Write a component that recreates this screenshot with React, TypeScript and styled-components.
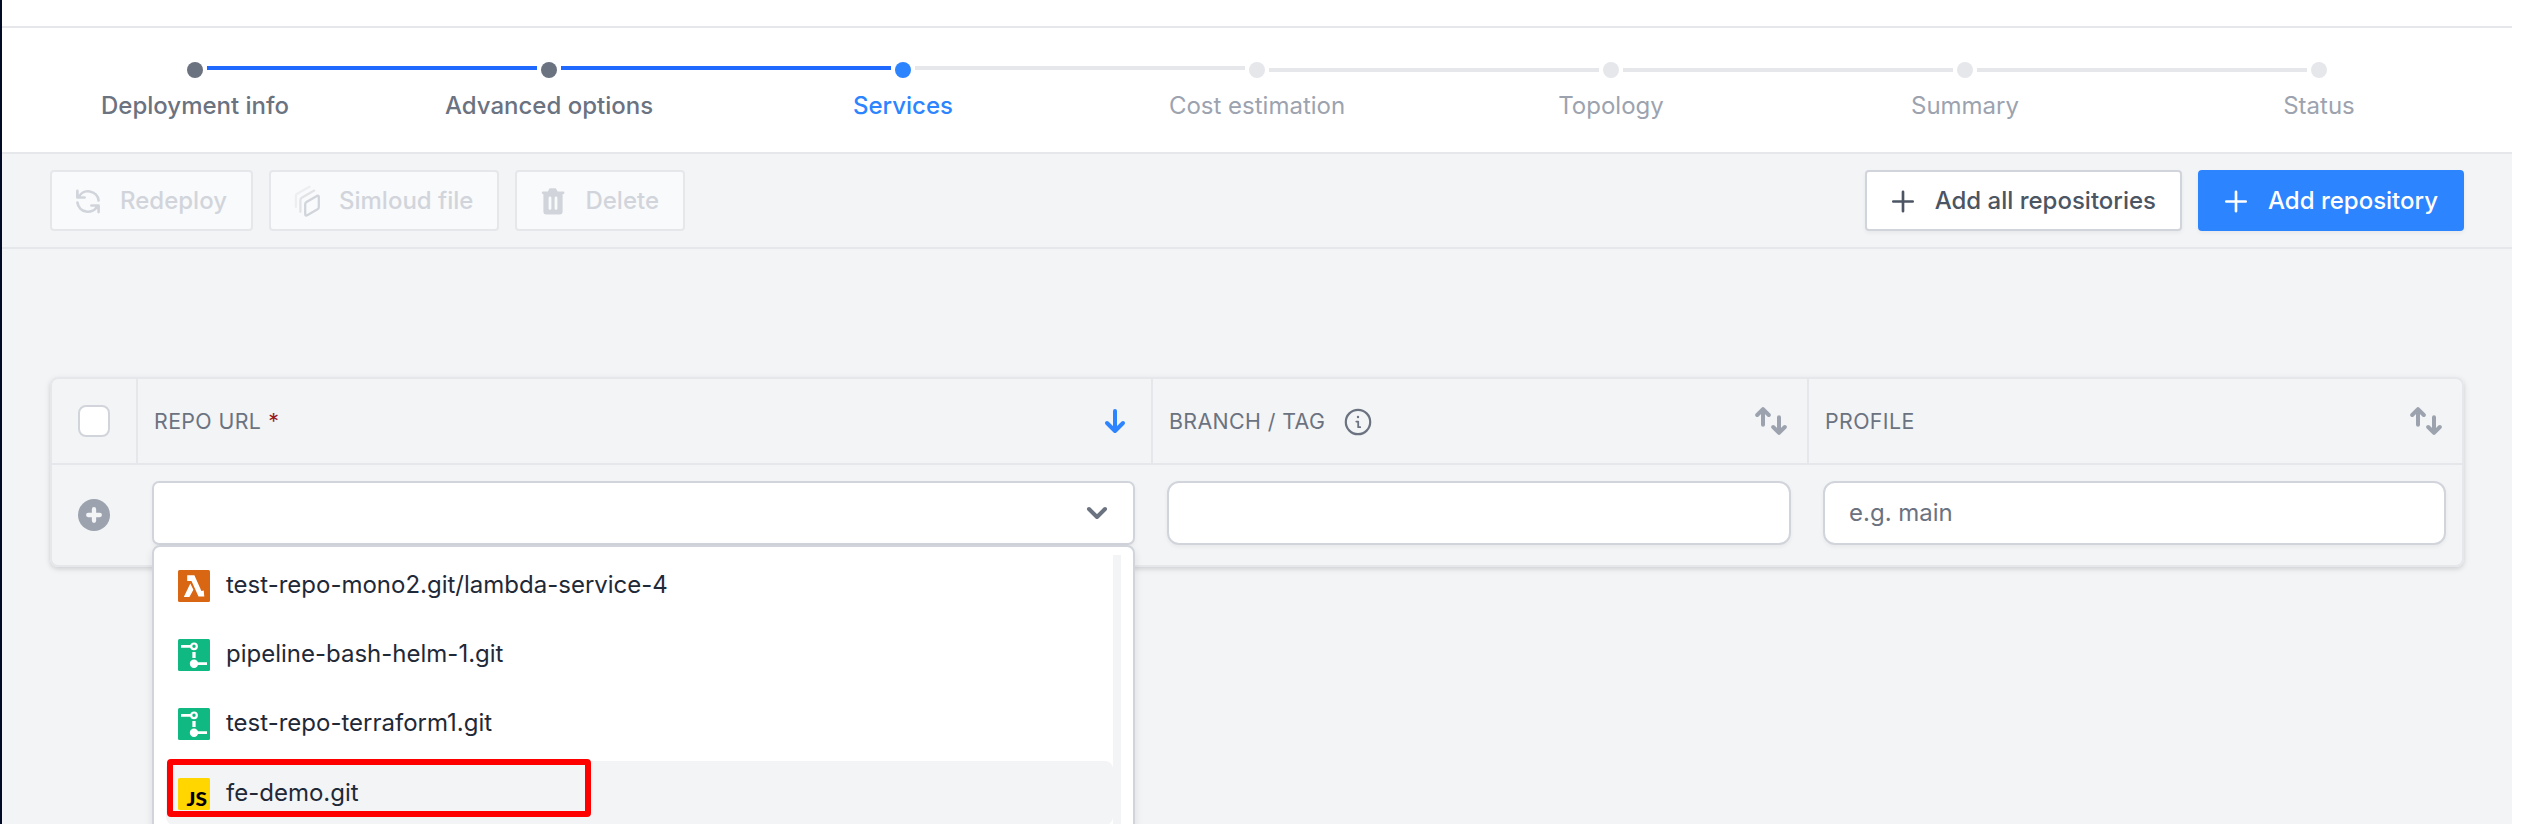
import React from 'react';
import styled, { createGlobalStyle, css } from 'styled-components';

const color = {
  ink: '#1f2937',
  text: '#4b5563',
  muted: '#6b7280',
  faint: '#9ca3af',
  disabled: '#d1d5db',
  field: '#d1d5db',
  line: '#e5e7eb',
  canvas: '#f3f4f6',
  primary: '#2c84ff',
  track: '#1f69ff',
};

const GlobalStyle = createGlobalStyle`
  *, *::before, *::after { box-sizing: border-box; }
  html, body { margin: 0; background: #fff; }
  body { font: 400 24px/32px Inter, "Liberation Sans", sans-serif; color: ${color.ink}; }
`;

const Page = styled.div`
  display: flex;
  width: 2541px;
  height: 824px;
  padding-right: 29px;
  overflow: hidden;
  background: #fff;
`;

const SideEdge = styled.div`
  width: 2px;
  background: #020b26;
`;

const Content = styled.main`
  flex: 1;
  min-width: 0;
  background: ${color.canvas};
`;

const TopStrip = styled.div`
  height: 28px;
  background: #fff;
  border-bottom: 2px solid ${color.line};
`;

/* ---------- Stepper ---------- */

type Phase = 'done' | 'current' | 'next';

const Stepper = styled.ol`
  display: grid;
  grid-template-columns: repeat(7, 1fr);
  height: 126px;
  margin: 0;
  padding: 34px 16px 0;
  list-style: none;
  background: #fff;
  border-bottom: 2px solid ${color.line};
`;

const Step = styled.li`
  display: flex;
  flex-direction: column;
  gap: 12px;
`;

const Rail = styled.div`
  display: grid;
  grid-template-columns: 1fr 16px 1fr;
  align-items: center;
  gap: 4px;
  height: 16px;
`;

const Segment = styled.span<{ $tone: 'none' | 'active' | 'idle'; $raised?: boolean }>`
  height: 4px;
  background: ${({ $tone }) => ($tone === 'none' ? 'transparent' : $tone === 'active' ? color.track : color.line)};
  ${({ $raised }) => $raised && css`margin-bottom: 4px;`}
`;

const Dot = styled.span<{ $phase: Phase }>`
  height: 16px;
  border-radius: 50%;
  background: ${({ $phase }) => ({ done: color.muted, current: color.primary, next: color.line })[$phase]};
`;

const StepLabel = styled.span<{ $phase: Phase }>`
  text-align: center;
  font-weight: ${({ $phase }) => ($phase === 'next' ? 400 : 450)};
  color: ${({ $phase }) => ({ done: color.muted, current: color.primary, next: color.faint })[$phase]};
`;

const steps = ['Deployment info', 'Advanced options', 'Services', 'Cost estimation', 'Topology', 'Summary', 'Status'];
const currentStep = 2;

const tone = (line: number) =>
  line < 0 || line >= steps.length - 1 ? 'none' : line < currentStep ? 'active' : 'idle';

/* ---------- Toolbar ---------- */

const Toolbar = styled.div`
  display: flex;
  gap: 16px;
  height: 95px;
  padding: 16px 48px;
  border-bottom: 2px solid ${color.line};
`;

const Spacer = styled.div`
  flex: 1;
`;

const variants = {
  disabled: css`
    color: ${color.disabled};
    background: #f9fafb;
    border-color: ${color.line};
  `,
  plain: css`
    color: ${color.text};
    background: #fff;
    border-color: ${color.field};
    box-shadow: 0 2px 4px rgba(0, 0, 0, 0.05);
  `,
  primary: css`
    color: #fff;
    background: ${color.primary};
    border-color: ${color.primary};
    box-shadow: 0 2px 4px rgba(0, 0, 0, 0.05);
  `,
};

const Button = styled.button<{ $variant: keyof typeof variants }>`
  display: flex;
  align-items: center;
  gap: 16px;
  height: 61px;
  padding: 0 24px 0 20px;
  border: 2px solid;
  border-radius: 4px;
  font: 500 24px/32px Inter, "Liberation Sans", sans-serif;
  white-space: nowrap;
  ${({ $variant }) => variants[$variant]}
`;

const Icon = styled.svg.attrs({ viewBox: '0 0 32 32' })`
  display: block;
  flex: none;
  width: 32px;
  height: 32px;
  fill: none;
  stroke: currentColor;
  stroke-linecap: round;
  stroke-linejoin: round;
`;

const RefreshIcon = () => (
  <Icon strokeWidth="2.67">
    <path d="M5.4 5.9v6.6h7.2M6.6 12.2a10.6 10.6 0 0 1 20 3.3" />
    <path d="M26.6 27.1v-6.6h-7.2M25.4 20.8a10.6 10.6 0 0 1-20-3.3" />
  </Icon>
);

const LayersIcon = () => (
  <Icon strokeWidth="2.3">
    <path d="M14.2 19.2q0-1.6 1.3-2.3l10.4-6q1.9-.9 1.9 1V22q0 1.5-1.3 2.3L16.2 30.2q-2 .9-2-1.1z" />
    <path d="M9.4 26.8V15.2q0-1.6 1.3-2.4L23.2 5.6" opacity="0.6" />
    <path d="M4.9 22V10.9q0-1.4 1.2-2.1L18.6 1.8" opacity="0.3" />
  </Icon>
);

const TrashIcon = () => (
  <Icon>
    <path
      fill="currentColor"
      stroke="none"
      fillRule="evenodd"
      d="M12.6 3.3h6.1l2 3.2h5.4a1.3 1.3 0 0 1 0 2.7h-.5v17.9a2.4 2.4 0 0 1-2.4 2.4H8.8a2.4 2.4 0 0 1-2.4-2.4V9.2h-.3a1.3 1.3 0 0 1 0-2.7h4.7zM11.6 12.9v10.5a1.4 1.4 0 0 0 2.8 0V12.9a1.4 1.4 0 0 0-2.8 0zM17.6 12.9v10.5a1.4 1.4 0 0 0 2.8 0V12.9a1.4 1.4 0 0 0-2.8 0z"
    />
  </Icon>
);

const PlusIcon = () => (
  <Icon strokeWidth="2.67">
    <path d="M16 6.8v19.4M6.3 16.5h19.4" />
  </Icon>
);

/* ---------- Table ---------- */

const Table = styled.section`
  margin: 128px 48px 0;
  height: 190px;
  border: 2px solid ${color.line};
  border-radius: 8px;
  box-shadow: 0 2px 6px rgba(0, 0, 0, 0.1), 0 2px 4px rgba(0, 0, 0, 0.06);
`;

const Row = styled.div<{ $header?: boolean }>`
  display: grid;
  grid-template-columns: 84px 1015px 656px 655px;
  height: ${({ $header }) => ($header ? 86 : 100)}px;
  ${({ $header }) => $header && css`border-bottom: 2px solid ${color.line};`}
`;

const CenterCell = styled.div`
  display: flex;
  align-items: center;
  justify-content: center;
`;

const HeadCell = styled.div`
  display: flex;
  align-items: center;
  padding: 0 20px 0 16px;
  border-left: 2px solid ${color.line};
  color: ${color.muted};
  font-size: 21.33px;
  font-weight: 430;
  letter-spacing: 0.4px;
`;

const Required = styled.span`
  margin-left: 7px;
  color: #991b1b;
`;

const HeadIcon = styled.span<{ $active?: boolean }>`
  margin-left: auto;
  color: ${({ $active }) => ($active ? color.primary : color.faint)};
`;

const InfoMark = styled.span`
  margin: 2px 0 0 17px;
`;

const BodyCell = styled.div`
  padding: 16px;
`;

const Checkbox = styled.span`
  width: 32px;
  height: 32px;
  border: 2px solid ${color.field};
  border-radius: 8px;
  background: #fff;
`;

const AddRow = styled.span`
  color: ${color.faint};
`;

const Field = styled.div`
  display: flex;
  align-items: center;
  height: 64px;
  padding: 0 24px;
  border: 2px solid ${color.field};
  border-radius: 12px;
  background: #fff;
  color: ${color.muted};
  box-shadow: 0 2px 4px rgba(0, 0, 0, 0.05);
`;

const Select = styled(Field)`
  position: relative;
  justify-content: flex-end;
  padding: 0 20px;
  border-radius: 7px;
`;

const Menu = styled.div`
  position: absolute;
  top: 62px;
  left: -2px;
  right: -2px;
  display: flex;
  height: 330px;
  padding: 8px 12px 0;
  border: 2px solid ${color.field};
  border-radius: 8px;
  background: #fff;
  box-shadow: 0 4px 8px rgba(0, 0, 0, 0.1);
`;

const Options = styled.div`
  display: flex;
  flex: 1;
  flex-direction: column;
  gap: 5.33px;
  margin-top: -2.3px;
`;

const ScrollTrack = styled.div`
  width: 8px;
  background: ${color.canvas};
`;

const Option = styled.div<{ $active?: boolean }>`
  position: relative;
  display: flex;
  flex: none;
  align-items: center;
  gap: 16px;
  height: 64px;
  padding: 0 12px;
  border-radius: 8px;
  color: ${color.ink};
  background: ${({ $active }) => ($active ? color.canvas : 'transparent')};

  > svg {
    margin-top: 2px;
  }
`;

const Highlight = styled.span`
  position: absolute;
  top: -1.5px;
  left: 0.5px;
  width: 424.5px;
  height: 57.5px;
  border: 6px solid #f00;
  border-radius: 4px;
`;

const LambdaIcon = () => (
  <Icon>
    <g stroke="none">
      <rect width="32" height="32" rx="1.5" fill="#d86613" />
      <path fill="#fff" d="M9.2 5.3h7.2l7 15.8 2.3-.6.6 5.9h-5.8L13.5 10.9H9.2zM12.3 13.5l3.1 6.2L11.4 27H5.8z" />
    </g>
  </Icon>
);

const PipelineIcon = () => (
  <Icon>
    <rect width="32" height="32" rx="1.5" fill="#10b981" stroke="none" />
    <g stroke="#fff" strokeLinecap="butt">
      <path d="M3 7.3h10.5M16 24.7h13" strokeWidth="2.67" />
      <path d="M16 13v6" strokeWidth="3.3" />
      <circle cx="16" cy="7.3" r="2.8" strokeWidth="2.2" />
      <circle cx="16" cy="24.7" r="4.2" fill="#fff" stroke="none" />
    </g>
  </Icon>
);

const ScriptIcon = () => (
  <Icon>
    <g stroke="none">
      <rect width="32" height="32" rx="1.5" fill="#ffd600" />
      <text x="8.5" y="28" fontFamily="Lato" fontSize="18" fontWeight="900" textLength="20.5" lengthAdjust="spacingAndGlyphs" fill="#000">JS</text>
    </g>
  </Icon>
);

const SortIcon = () => (
  <Icon strokeWidth="4">
    <path d="M8 19.7V4.7M2.2 10L8 4.2 13.8 10M24 12.3v15M18.2 22L24 27.8 29.8 22" />
  </Icon>
);

const repos = [
  { name: 'test-repo-mono2.git/lambda-service-4', Glyph: LambdaIcon },
  { name: 'pipeline-bash-helm-1.git', Glyph: PipelineIcon },
  { name: 'test-repo-terraform1.git', Glyph: PipelineIcon },
  { name: 'fe-demo.git', Glyph: ScriptIcon, active: true },
];

export default function App() {
  return (
    <Page>
      <GlobalStyle />
      <SideEdge />
      <Content>
        <TopStrip />
        <Stepper>
          {steps.map((label, i) => {
            const phase: Phase = i < currentStep ? 'done' : i === currentStep ? 'current' : 'next';
            return (
              <Step key={label}>
                <Rail>
                  <Segment $tone={tone(i - 1)} $raised={i <= 3} />
                  <Dot $phase={phase} />
                  <Segment $tone={tone(i)} $raised={i < 3} />
                </Rail>
                <StepLabel $phase={phase}>{label}</StepLabel>
              </Step>
            );
          })}
        </Stepper>
        <Toolbar>
          <Button $variant="disabled"><RefreshIcon />Redeploy</Button>
          <Button $variant="disabled"><LayersIcon />Simloud file</Button>
          <Button $variant="disabled"><TrashIcon />Delete</Button>
          <Spacer />
          <Button $variant="plain"><PlusIcon />Add all repositories</Button>
          <Button $variant="primary"><PlusIcon />Add repository</Button>
        </Toolbar>
        <Table>
          <Row $header>
            <CenterCell><Checkbox /></CenterCell>
            <HeadCell>
              REPO URL<Required>*</Required>
              <HeadIcon $active>
                <Icon strokeWidth="4"><path d="M16 6v20M8 18l8 8 8-8" /></Icon>
              </HeadIcon>
            </HeadCell>
            <HeadCell>
              BRANCH / TAG
              <InfoMark>
                <Icon strokeWidth="2.2">
                  <circle cx="16" cy="16" r="12.2" />
                  <path d="M14.3 15.6h1.9v5.6h2" strokeWidth="1.8" />
                  <circle cx="16" cy="11" r="1.2" fill="currentColor" stroke="none" />
                </Icon>
              </InfoMark>
              <HeadIcon><SortIcon /></HeadIcon>
            </HeadCell>
            <HeadCell>
              PROFILE
              <HeadIcon><SortIcon /></HeadIcon>
            </HeadCell>
          </Row>
          <Row>
            <CenterCell>
              <AddRow>
                <Icon>
                  <circle cx="16" cy="16" r="16" fill="currentColor" stroke="none" />
                  <path d="M16 10.2v11.6M10.2 16h11.6" stroke={color.canvas} strokeWidth="4.3" />
                </Icon>
              </AddRow>
            </CenterCell>
            <BodyCell>
              <Select>
                <Icon strokeWidth="4"><path d="M8 12l8 8 8-8" /></Icon>
                <Menu>
                  <Options>
                    {repos.map(({ name, Glyph, active }) => (
                      <Option key={name} $active={active}>
                        <Glyph />
                        {name}
                        {active && <Highlight />}
                      </Option>
                    ))}
                  </Options>
                  <ScrollTrack />
                </Menu>
              </Select>
            </BodyCell>
            <BodyCell><Field /></BodyCell>
            <BodyCell><Field>e.g. main</Field></BodyCell>
          </Row>
        </Table>
      </Content>
    </Page>
  );
}
